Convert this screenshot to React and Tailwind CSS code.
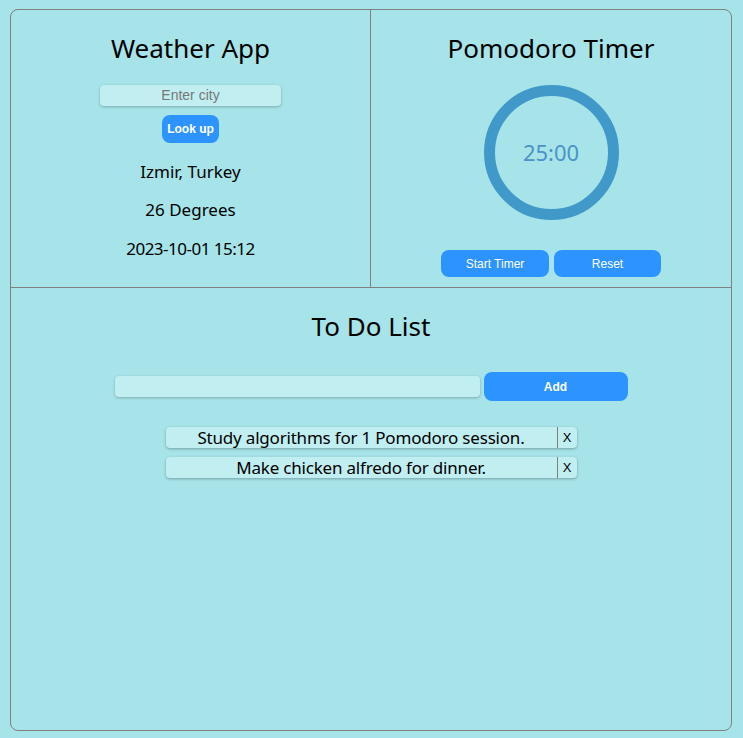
import React from "react";

const q = { fontFamily: '"Noto Sans", sans-serif' };
const arial = { fontFamily: '"Liberation Sans", Arial, sans-serif' };

export default function App() {
  return (
    <div className="min-h-[738px] w-full bg-[#a6e4e9] pt-[9px] pl-[10px] pr-[11px] pb-[7px]" style={q}>
      <div className="h-[722px] rounded-lg border border-[#808080] flex flex-col">
        <div className="grid grid-cols-2 border-b border-[#808080] h-[278px]">
          <div className="border-r border-[#808080] flex flex-col items-center pt-[23px]">
            <h1 className="text-[26px] leading-[30px] text-black">Weather App</h1>
            <input
              placeholder="Enter city"
              className="mt-[22px] w-[181px] h-[21px] rounded bg-[#c1eef1] shadow-[0_1px_3px_rgba(0,0,0,0.25)] text-center text-[14px] placeholder:text-[#777] outline-none"
              style={arial}
            />
            <button
              className="mt-[9px] w-[57px] h-[28px] rounded-lg bg-[#2d94ff] text-white text-[12px] font-bold"
              style={arial}
            >
              Look up
            </button>
            <p className="mt-[18px] text-[17px] leading-[22px]">Izmir, Turkey</p>
            <p className="mt-[16px] text-[17px] leading-[22px]">26 Degrees</p>
            <p className="mt-[17px] text-[17px] leading-[22px] tracking-[-0.5px]">2023-10-01 15:12</p>
          </div>
          <div className="flex flex-col items-center pt-[23px]">
            <h1 className="text-[26px] leading-[30px] text-black">Pomodoro Timer</h1>
            <div className="mt-[22px] w-[135px] h-[135px] rounded-full border-[11px] border-[#4199c9] flex items-center justify-center">
              <span className="text-[22px] text-[#4a93c4]">25:00</span>
            </div>
            <div className="mt-[30px] flex gap-[5px]" style={arial}>
              <button className="w-[108px] h-[27px] rounded-lg bg-[#2d94ff] text-white text-[12px]">Start Timer</button>
              <button className="w-[107px] h-[27px] rounded-lg bg-[#2d94ff] text-white text-[12px]">Reset</button>
            </div>
          </div>
        </div>
        <div className="flex flex-col items-center pt-[23px]">
          <h1 className="text-[26px] leading-[30px] text-black">To Do List</h1>
          <div className="mt-[31px] flex items-center gap-[4px]">
            <input className="w-[365px] h-[21px] rounded bg-[#c1eef1] shadow-[0_1px_3px_rgba(0,0,0,0.25)] outline-none" />
            <button
              className="w-[144px] h-[29px] rounded-lg bg-[#2d94ff] text-white text-[12px] font-bold"
              style={arial}
            >
              Add
            </button>
          </div>
          <div className="mt-[26px] flex flex-col gap-[9px]">
            {["Study algorithms for 1 Pomodoro session.", "Make chicken alfredo for dinner."].map((t) => (
              <div key={t} className="w-[411px] h-[21px] flex rounded bg-[#c1eef1] shadow-[0_1px_3px_rgba(0,0,0,0.3)]">
                <span className="flex-1 text-center text-[17px] leading-[21px] tracking-[-0.2px]">{t}</span>
                <span
                  className="w-[20px] border-l border-[#808080] text-center text-[13px] leading-[21px]"
                  style={arial}
                >
                  X
                </span>
              </div>
            ))}
          </div>
        </div>
      </div>
    </div>
  );
}
